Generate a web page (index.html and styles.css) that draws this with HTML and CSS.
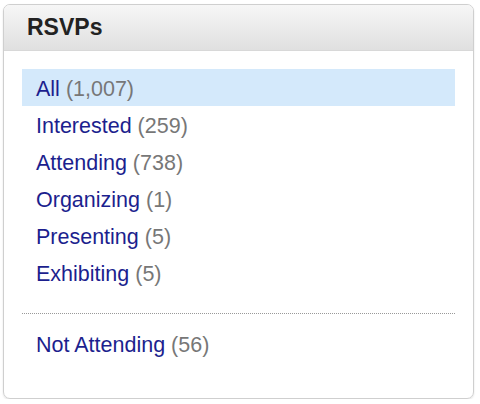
FILE: index.html
```html
<!DOCTYPE html>
<html lang="en">
<head>
  <meta charset="UTF-8" />
  <title>RSVPs</title>
  <link rel="stylesheet" href="styles.css">
</head>
<body>
  <div class="panel">
    <div class="panel-head">
      <h2>RSVPs</h2>
    </div>
    <div class="panel-body">
      <ul class="filters">
        <li class="active"><a href="#">All</a> <span class="count">(1,007)</span></li>
        <li><a href="#">Interested</a> <span class="count">(259)</span></li>
        <li><a href="#">Attending</a> <span class="count">(738)</span></li>
        <li><a href="#">Organizing</a> <span class="count">(1)</span></li>
        <li><a href="#">Presenting</a> <span class="count">(5)</span></li>
        <li><a href="#">Exhibiting</a> <span class="count">(5)</span></li>
      </ul>
      <hr class="divider">
      <ul class="filters">
        <li><a href="#">Not Attending</a> <span class="count">(56)</span></li>
      </ul>
    </div>
  </div>
</body>
</html>
```

FILE: styles.css
```css
* {
  box-sizing: border-box;
  margin: 0;
  padding: 0;
}
body {
  background: #fff;
  font-family: "Liberation Sans", Arial, sans-serif;
}
.panel {
  margin: 4px 0 0 3px;
  width: 471px;
  height: 395px;
  border: 1px solid #cfcfcf;
  border-radius: 7px;
  box-shadow: 0 1px 2px rgba(0, 0, 0, 0.12);
  overflow: hidden;
}
.panel-head {
  height: 46px;
  padding: 0 0 0 23px;
  display: flex;
  align-items: center;
  background: linear-gradient(#f6f6f6, #e0e0e0);
  border-bottom: 1px solid #d8d8d8;
}
.panel-head h2 {
  font-size: 23px;
  font-weight: bold;
  color: #222;
}
.panel-body {
  padding: 18px 18px 0 18px;
}
.filters {
  list-style: none;
}
.filters li {
  height: 37px;
  padding: 4px 0 0 14px;
  line-height: 33px;
  font-size: 21.5px;
}
.filters li.active {
  background: #d4e9fb;
}
.filters a {
  color: #1c1f8e;
  text-decoration: none;
}
.count {
  color: #777;
}
.divider {
  border: none;
  border-top: 1px dotted #999;
  margin: 22px 0 11px 0;
}
```
